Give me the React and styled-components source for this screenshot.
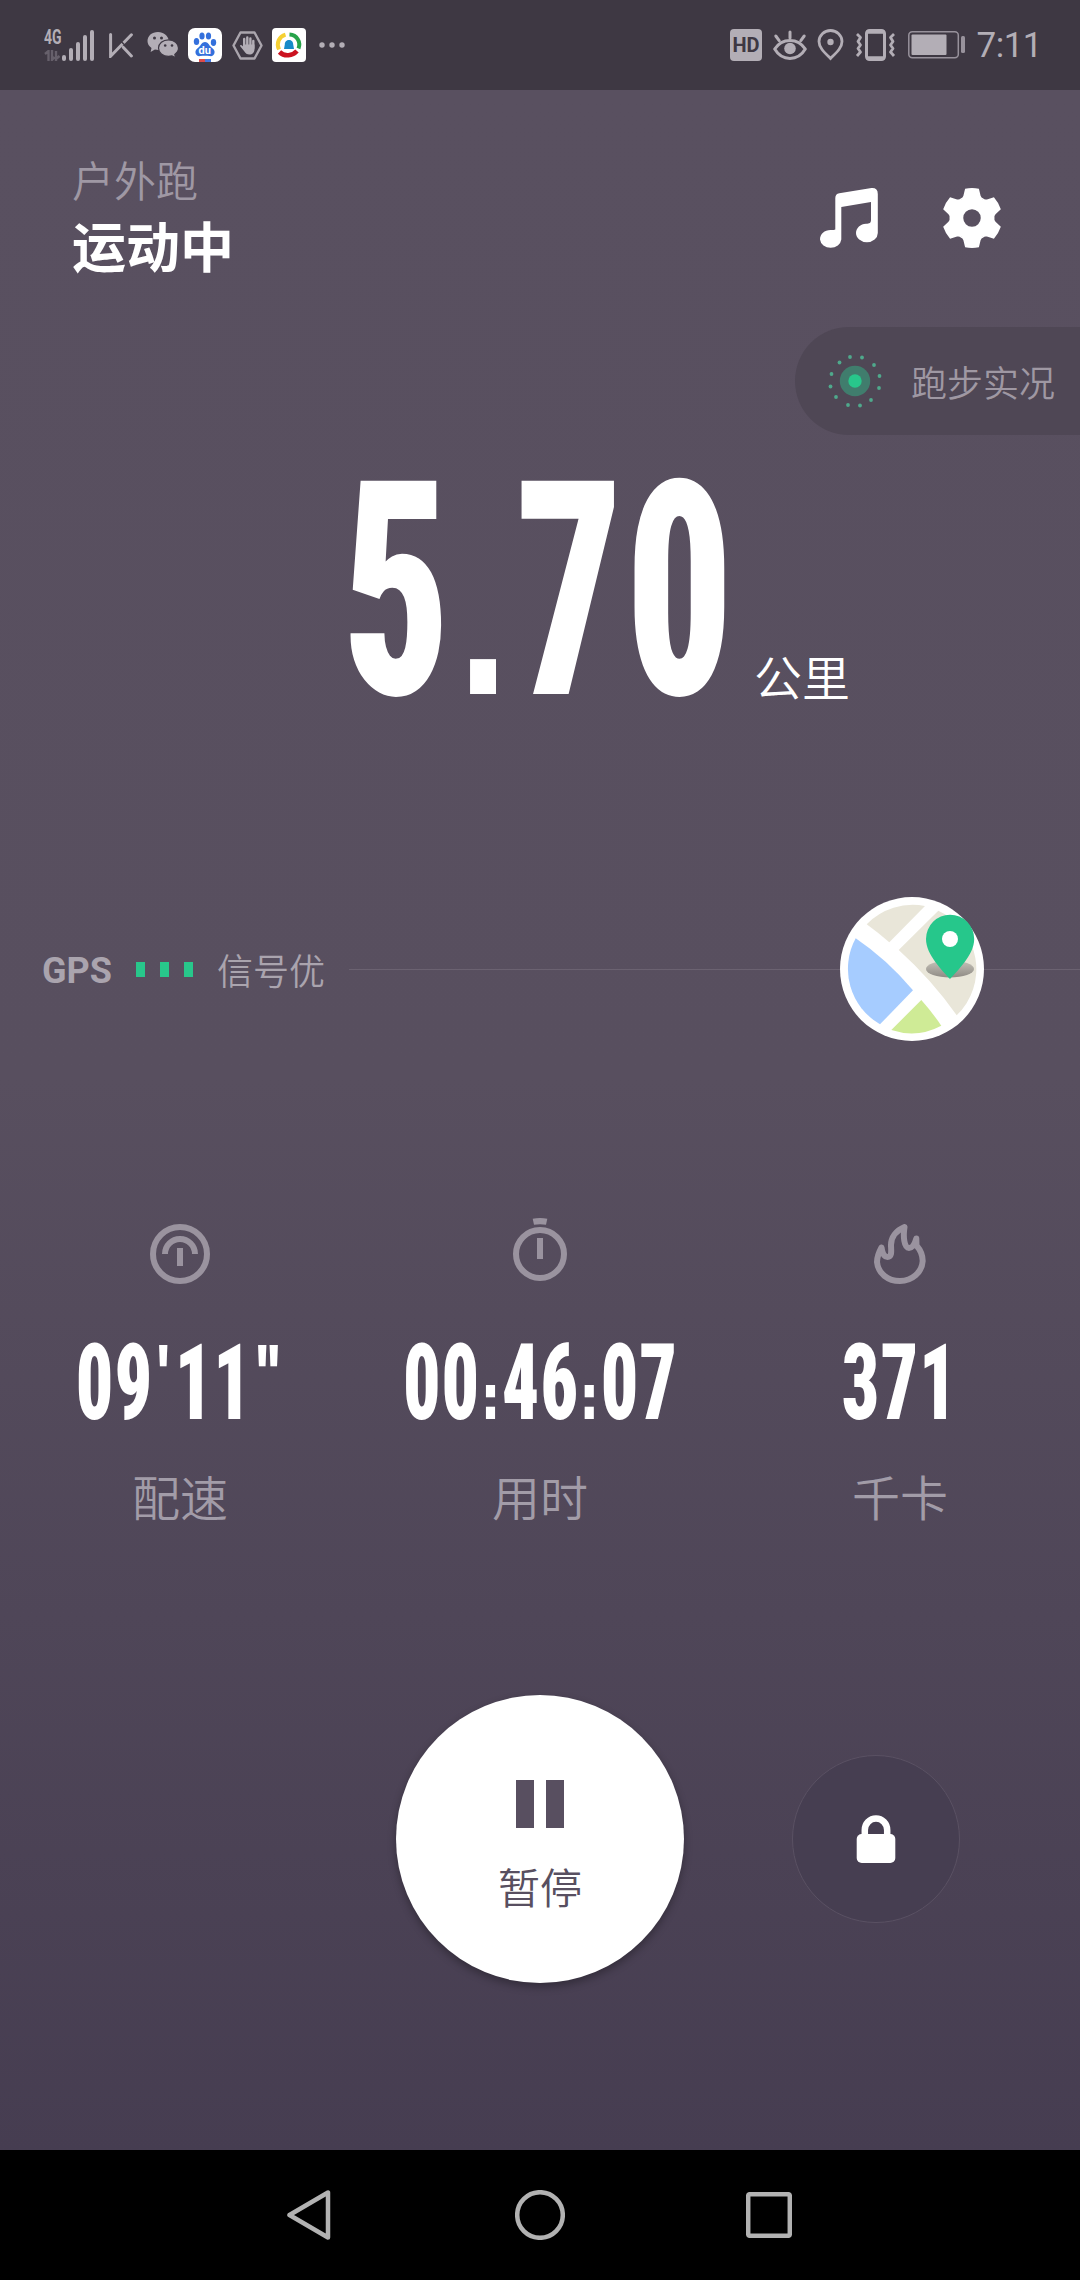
import styled, { createGlobalStyle } from 'styled-components';

const GlobalStyle = createGlobalStyle`
  * { box-sizing: border-box; }
  body {
    margin: 0;
    background: #000;
    font-family: 'Noto Sans CJK SC', sans-serif;
  }
  svg { display: block; flex: none; }
`;

const stats = [
  { id: 'pace', icon: <PaceIcon />, value: '09\'11"', label: '配速' },
  { id: 'time', icon: <TimerIcon />, value: '00:46:07', label: '用时' },
  { id: 'kcal', icon: <FlameIcon />, value: '371', label: '千卡' },
];

function App() {
  return (
    <Phone>
      <GlobalStyle />
      <StatusBar />
      <Main>
        <Header>
          <Titles>
            <Mode>户外跑</Mode>
            <State>运动中</State>
          </Titles>
          <HeaderIcons>
            <MusicIcon />
            <GearIcon />
          </HeaderIcons>
        </Header>

        <LivePill>
          <LiveIcon />
          跑步实况
        </LivePill>

        <Distance>
          <BigNumber><Numerals value="5.70" /></BigNumber>
          <Unit>公里</Unit>
        </Distance>

        <GpsRow>
          <GpsName>GPS</GpsName>
          <SignalBlocks>
            <SignalBlock />
            <SignalBlock />
            <SignalBlock />
          </SignalBlocks>
          <GpsState>信号优</GpsState>
          <Rule />
          <MapIcon />
          <Rule $width="96px" />
        </GpsRow>

        <Stats>
          {stats.map((s) => (
            <Stat key={s.id}>
              {s.icon}
              <StatValue><Numerals value={s.value} /></StatValue>
              <StatLabel>{s.label}</StatLabel>
            </Stat>
          ))}
        </Stats>

        <Controls>
          <PauseButton type="button">
            <PauseBars>
              <PauseBar />
              <PauseBar />
            </PauseBars>
            暂停
          </PauseButton>
          <LockButton type="button"><LockIcon /></LockButton>
        </Controls>
      </Main>
      <NavBar />
    </Phone>
  );
}

export default App;


// Roboto only has round dots, so the punctuation is set in Inter with its square forms
function Numerals({ value }) {
  return (
    <Squeezed>
      {value.split(/([.:'"])/).filter(Boolean).map((part, i) => (
        /[.:'"]/.test(part)
          ? <Mark key={i} $raised={/['"]/.test(part)}>{part}</Mark>
          : <span key={i}>{part}</span>
      ))}
    </Squeezed>
  );
}

function StatusBar() {
  return (
    <Status>
      <Network>
        <NetworkType>4G</NetworkType>
        <svg width="16" height="11" viewBox="0 0 16 11" fill="none" stroke="#66606b" strokeWidth="2.4">
          <path d="M1 4l3.500-3v10M8 0v10l2.500-3M12 11V1M12 9l3.500-3" />
        </svg>
      </Network>
      <svg width="33" height="31" viewBox="0 0 33 31" fill="#b3aeb6">
        <rect x="0" y="25" width="4" height="6" rx="2" />
        <rect x="7" y="18" width="4" height="13" rx="2" />
        <rect x="14" y="12" width="4" height="19" rx="2" />
        <rect x="21" y="5" width="4" height="26" rx="2" />
        <rect x="28" y="0" width="4" height="31" rx="2" />
      </svg>
      <KeepIcon />
      <WechatIcon />
      <BaiduIcon />
      <HandIcon />
      <NewsIcon />
      <svg width="26" height="6" viewBox="0 0 26 6" fill="#b3aeb6">
        <circle cx="3" cy="3" r="2.700" />
        <circle cx="13" cy="3" r="2.700" />
        <circle cx="23" cy="3" r="2.700" />
      </svg>

      <StatusRight>
        <HdBadge>HD</HdBadge>
        <EyeIcon />
        <PinIcon />
        <VibrateIcon />
        <BatteryIcon />
        <Clock>7:11</Clock>
      </StatusRight>
    </Status>
  );
}

function KeepIcon() {
  return (
    <svg width="24" height="25" viewBox="0 0 24 25" fill="none" stroke="#b3aeb6" strokeWidth="3" strokeLinecap="round">
      <path d="M1.600 1.600v21.600L22.400 1.800M14.400 14.400l8 8.600" />
      <path d="M12.200 8.600l4 4" stroke="#3e3843" strokeWidth="1.400" />
    </svg>
  );
}

function WechatIcon() {
  return (
    <svg width="32" height="28" viewBox="0 0 32 28">
      <path fill="#b3aeb6" d="M11 1C4.800 1 .5 4.900.5 10c0 3 1.500 5.300 4 7L3.600 21l4.300-2.400c1.200.3 2.400.4 3.600.4L22 10C21 4.700 16.700 1 11 1z" />
      <path fill="#b3aeb6" stroke="#3e3843" strokeWidth="1.200" d="M21.500 8.800c-5.700 0-10 3.700-10 8.300s4.300 8.300 10 8.300c1.200 0 2.400-.2 3.500-.5l3.700 2-.9-3.400c2.200-1.600 3.700-3.800 3.700-6.400 0-4.600-4.300-8.300-10-8.300z" />
      <g fill="#3e3843">
        <circle cx="7.500" cy="7" r="1.500" />
        <circle cx="14.500" cy="7" r="1.500" />
        <circle cx="18.200" cy="14.500" r="1.300" />
        <circle cx="25" cy="14.500" r="1.300" />
      </g>
    </svg>
  );
}

function BaiduIcon() {
  return (
    <svg width="34" height="34" viewBox="0 0 34 34">
      <rect width="34" height="34" rx="7" fill="#fff" />
      <g fill="#3470dc">
        <ellipse cx="8.500" cy="13.500" rx="2.700" ry="3.500" />
        <ellipse cx="14" cy="8" rx="2.600" ry="3.600" />
        <ellipse cx="20.500" cy="8" rx="2.600" ry="3.600" />
        <ellipse cx="25.500" cy="14.500" rx="2.700" ry="3.400" />
        <path d="M17 14c-3 0-4 3-6 5-2.500 2-4 3.500-3.500 6s2.500 3.500 5 3c3-.5 6-.5 9 0 2.500.5 4.500-.5 5-3s-1-4-3.500-6c-2-2-3-5-6-5z" />
      </g>
      <text x="16.700" y="26" textAnchor="middle" fill="#fff" fontFamily="Roboto" fontWeight="700" fontSize="11">du</text>
      <path d="M11 31h6v3h-6z" fill="#dd4b4b" />
      <path d="M17 31h6v3h-6z" fill="#4478e0" />
    </svg>
  );
}

function HandIcon() {
  return (
    <svg width="31" height="29" viewBox="0 0 31 29">
      <path d="M8.500 1.500h14l7 13-7 13h-14l-7-13z" fill="none" stroke="#aaa5ad" strokeWidth="2.400" strokeLinejoin="round" />
      <path d="M12.200 16V8M15.300 15V6.500M18.400 15V7.500M21.300 17v-7" fill="none" stroke="#b3aeb6" strokeWidth="2.400" strokeLinecap="round" />
      <path d="M11 13.500h11.500V18c0 3.500-2 5.500-5 5.500-2.500 0-4-1-5.500-3.500l-4-5c0-1.500 1.500-1.500 3 .5z" fill="#b3aeb6" />
    </svg>
  );
}

function NewsIcon() {
  return (
    <svg width="34" height="34" viewBox="0 0 34 34">
      <rect width="34" height="34" rx="4" fill="#fff" />
      <g fill="none" strokeWidth="4">
        <path d="M7 21.500C4 15 7 8.500 13.500 6.600" stroke="#f6d033" />
        <path d="M17.500 6.600C25 7 29 14 26.500 20.500" stroke="#27a34a" />
        <path d="M7.500 24c5 5 13 4 17.500-1" stroke="#cb1220" strokeWidth="4.600" />
      </g>
      <path d="M17 12c-3.200 0-4.200 2.500-4.200 4.500L12 21h10l-.8-4.500c0-2-1-4.500-4.200-4.500z" fill="#178ac8" />
    </svg>
  );
}

function EyeIcon() {
  return (
    <svg width="34" height="31" viewBox="0 0 34 31" fill="none" stroke="#b3aeb6" strokeWidth="3" strokeLinecap="round">
      <path d="M1.700 19C9 7.500 25 7.500 32.300 19 25 31.500 9 31.500 1.700 19z" strokeLinejoin="round" />
      <path d="M17 2v6M2.800 6l3.400 4.600M31.200 6l-3.400 4.600" />
      <circle cx="17" cy="18.500" r="5.800" fill="#b3aeb6" stroke="none" />
    </svg>
  );
}

function PinIcon() {
  return (
    <svg width="27" height="32" viewBox="0 0 27 32">
      <path d="M13.500 29.500C7 23 2 18.500 2 12.500a11.500 11 0 0 1 23 0c0 6-5 10.500-11.500 17z" fill="none" stroke="#b3aeb6" strokeWidth="2.800" />
      <circle cx="13.500" cy="13" r="3.200" fill="#b3aeb6" />
    </svg>
  );
}

function VibrateIcon() {
  return (
    <svg width="41" height="32" viewBox="0 0 41 32" fill="none" stroke="#b3aeb6" strokeWidth="3">
      <rect x="11.500" y="1.500" width="18" height="29" rx="3" />
      <path d="M11 3.200h19M11 28.800h19" />
      <path d="M2 5l3.500 3.500L3 12.500 5.500 16 3 19.500 5.500 23 2 27M39 5l-3.500 3.500L38 12.500 35.500 16l2.500 3.500-2.500 3.500L39 27" strokeWidth="2.800" strokeLinejoin="round" />
    </svg>
  );
}

function BatteryIcon() {
  return (
    <svg width="58" height="28" viewBox="0 0 58 28">
      <rect x=".8" y=".8" width="49.500" height="26" rx="3.500" fill="none" stroke="#98929c" strokeWidth="1.500" />
      <rect x="3.500" y="3.500" width="35" height="20.500" rx="1" fill="#b3aeb6" />
      <rect x="53" y="5" width="4" height="17" rx="1.500" fill="#98929c" />
    </svg>
  );
}

function MusicIcon() {
  return (
    <svg width="58" height="60" viewBox="0 0 58 60" fill="#fff">
      <path d="M15.300 41.500V10q0-4 4-4.700L51.500.1Q57.800-.3 57.800 6v39a10.900 9.200 0 0 1-21.800 0c0-5 4.500-9.200 10-9.300 3.500 0 5-.7 5-4V14l-29.700 5v32.500A10.700 9.200 0 0 1 0 51.500c0-5.500 4.500-9.500 10.500-9.500 2.500 0 4-.1 4.800-.5z" />
    </svg>
  );
}

function GearIcon() {
  return (
    <svg width="60" height="60" viewBox="-30 -30 60 60" fill="#fff">
      <circle r="15" fill="none" stroke="#fff" strokeWidth="12.500" />
      {[0, 60, 120, 180, 240, 300].map((deg) => (
        <path
          key={deg}
          transform={`rotate(${deg})`}
          d="M-7-12L-11.300-19.400Q-9.200-20-8.600-22.200L-6.900-29.300Q0-30.700 6.900-29.300L8.600-22.200Q9.200-20 11.300-19.400L7-12z"
        />
      ))}
    </svg>
  );
}

// pulsing dot with a loose ring of small ones
function LiveIcon() {
  const dots = [[-5, -24], [7, -23.500], [19, -16], [24.500, -5], [24, 7], [16, 19], [5, 24.500], [-7, 24], [-19, 16], [-24.500, 5.500], [-23.500, -7], [-15.500, -18.500]];
  return (
    <svg width="54" height="54" viewBox="-27 -27 54 54">
      {dots.map(([x, y]) => <circle key={`${x},${y}`} cx={x} cy={y} r="1.900" fill="#4fa98c" />)}
      <circle r="15.200" fill="#407d6d" />
      <circle r="6.700" fill="#28c78b" />
    </svg>
  );
}

function MapIcon() {
  return (
    <svg width="144" height="144" viewBox="0 0 144 144">
      <defs>
        <linearGradient id="pinShadow" x1="0" y1="0" x2="0" y2="1">
          <stop offset="0" stopColor="#c6c2b9" />
          <stop offset="1" stopColor="#8f8b85" />
        </linearGradient>
      </defs>
      <circle cx="72" cy="72" r="72" fill="#fff" />
      <path d="M26.700 27.300A64 64 0 0 1 85 9L49.300 45.300Q38 35.500 26.700 27.300z" fill="#e9e6d9" />
      <path d="M98.300 13.700A64 64 0 0 1 116.700 118.300Q92 83 58.700 53z" fill="#e9e6d9" />
      <path d="M15.700 41.300Q47 62.500 73 93.300L40 127.300A64 64 0 0 1 15.700 41.300z" fill="#a6ccff" />
      <path d="M81.300 103Q92 115 101.300 128.700A64 64 0 0 1 51.300 133z" fill="#cfeb96" />
      <ellipse cx="110" cy="72" rx="24" ry="8.500" fill="url(#pinShadow)" />
      <path d="M110 82C103 74 86 58 86 42a24.100 24.300 0 0 1 48.200 0C134.200 58 117 74 110 82z" fill="#26c78b" />
      <circle cx="110" cy="42" r="8" fill="#fff" />
    </svg>
  );
}

function PaceIcon() {
  return (
    <StatIcon width="60" height="66" viewBox="0 0 60 66" fill="none" stroke="#9a939f" strokeWidth="6">
      <circle cx="30" cy="36" r="27" />
      <path d="M15 36a15 15 0 0 1 30 0M30 30v18" />
    </StatIcon>
  );
}

function TimerIcon() {
  return (
    <StatIcon width="60" height="66" viewBox="0 0 60 66" fill="none" stroke="#9a939f" strokeWidth="6">
      <circle cx="30" cy="36" r="24" />
      <path d="M30 20v21" />
      <path d="M22.700.8Q30-.6 37.300.8L36 6.800Q30 5.600 24 6.800z" fill="#9a939f" stroke="none" />
    </StatIcon>
  );
}

function FlameIcon() {
  return (
    <StatIcon width="60" height="66" viewBox="-4 -6 60 66" fill="none" stroke="#9a939f" strokeWidth="6" strokeLinejoin="round">
      <path d="M7.500 23.500C4.500 29 3 33 3 38c1 11.500 11 19 23 19s22-8.500 22.700-20c0-6-2.300-11-6.200-15.500L42.300 14.500C41 19 39 24 35 24c-5 0-6-12-4.500-21C22 6.500 17 13.500 17 21c0 5 1.500 12-3.500 12-3 0-5-3-6-9.500z" />
    </StatIcon>
  );
}

function LockIcon() {
  return (
    <svg width="40" height="48" viewBox="0 0 40 48">
      <path d="M8.800 22V15a11.200 11.500 0 0 1 22.400 0v7" fill="none" stroke="#fff" strokeWidth="6.500" />
      <rect x=".7" y="19" width="38.600" height="29" rx="5" fill="#fff" />
    </svg>
  );
}

function NavBar() {
  return (
    <Nav>
      <svg width="44" height="50" viewBox="0 0 44 50">
        <path d="M41 2.500v45L2.500 25z" />
      </svg>
      <HomeIcon width="50" height="50" viewBox="0 0 50 50">
        <circle cx="25" cy="25" r="22.800" />
      </HomeIcon>
      <svg width="46" height="46" viewBox="0 0 46 46">
        <rect x="2.200" y="2.200" width="41.600" height="41.600" rx="1.500" />
      </svg>
    </Nav>
  );
}


const Phone = styled.div`
width: 1080px;
height: 2280px;
display: flex;
flex-direction: column;
overflow: hidden;
`;

const Status = styled.div`
height: 90px;
flex: none;
display: flex;
align-items: center;
padding: 0 38px 0 44px;
background: #3e3843;

> svg:nth-of-type(2) { margin-left: 14px; }
> svg:nth-of-type(3) { margin-left: 14px; }
> svg:nth-of-type(4) { margin-left: 9px; }
> svg:nth-of-type(5) { margin-left: 10px; }
> svg:nth-of-type(6) { margin-left: 9px; }
> svg:nth-of-type(7) { margin-left: 13px; }
`;

const Network = styled.div`
width: 18px;
height: 31px;
display: flex;
flex-direction: column;
justify-content: space-between;
`;

const NetworkType = styled.span`
font: 700 20px/15px Roboto, sans-serif;
color: #b3aeb6;
transform: scaleX(0.7);
transform-origin: left;
`;

const StatusRight = styled.div`
margin-left: auto;
display: flex;
align-items: center;
gap: 10.5px;

svg:last-of-type { margin-left: 2px; }
`;

const HdBadge = styled.span`
width: 32px;
height: 32px;
border-radius: 4px;
background: #b3aeb6;
color: #3e3843;
font: 700 20px/33px Roboto, sans-serif;
text-align: center;
`;

const Clock = styled.span`
padding-top: 2px;
font: 400 35px/40px Roboto, sans-serif;
letter-spacing: -0.5px;
color: #b3aeb6;
`;

const Main = styled.main`
height: 2060px;
flex: none;
display: flex;
flex-direction: column;
background: linear-gradient(#595060 0, #584f5f 48%, #463d51 100%);
`;

const Header = styled.header`
height: 237px;
display: flex;
justify-content: space-between;
padding: 58px 78px 0 72px;
`;

const Titles = styled.div`
display: flex;
flex-direction: column;
`;

const Mode = styled.span`
font-size: 42px;
line-height: 62px;
font-weight: 350;
color: #9f98a4;
`;

const State = styled.span`
font-size: 54px;
line-height: 70px;
font-weight: 700;
color: #fff;
`;

const HeaderIcons = styled.div`
display: flex;
gap: 64px;
padding-top: 40px;
`;

const LivePill = styled.div`
align-self: flex-end;
width: 285px;
height: 108px;
display: flex;
align-items: center;
gap: 29px;
padding-left: 33px;
border-radius: 54px 0 0 54px;
background: #4f4755;
font-size: 36px;
font-weight: 350;
color: #9f98a3;
white-space: nowrap;
`;

const Distance = styled.div`
height: 300px;
margin-top: 6px;
display: flex;
padding-left: 353px;
color: #fff;
`;

const BigNumber = styled.div`
width: 374px;
display: flex;
justify-content: center;
font: 900 300px/302px Roboto, sans-serif;
`;

const Squeezed = styled.span`
flex: none;
white-space: nowrap;
font-stretch: 75%;
letter-spacing: 0.014em;
transform: scaleX(0.7);
`;

const Mark = styled.span`
margin: 0 0.04em;
font-family: Inter, sans-serif;
font-size: 0.62em;
line-height: 0;
font-feature-settings: 'calt' 0, 'ss07' 1, 'ss08' 1;
vertical-align: ${(p) => (p.$raised ? '0.42em' : 'baseline')};
`;

const Unit = styled.span`
margin: 204px 0 0 27px;
font-size: 48px;
line-height: 60px;
font-weight: 350;
`;

const GpsRow = styled.div`
height: 144px;
margin-top: 156px;
padding-left: 42px;
display: flex;
align-items: center;
color: #aaa4ae;
`;

const GpsName = styled.span`
width: 94px;
margin-top: 3px;
font: 700 36px/44px Roboto, sans-serif;
`;

const SignalBlocks = styled.div`
display: flex;
gap: 15px;
`;

const SignalBlock = styled.i`
width: 9px;
height: 15px;
background: #28c78b;
`;

const GpsState = styled.span`
margin: 0 24px 1px;
font-size: 36px;
line-height: 44px;
font-weight: 350;
`;

const Rule = styled.div`
height: 1px;
flex: ${(p) => (p.$width ? `0 0 ${p.$width}` : 1)};
background: #6b6271;
`;

const Stats = styled.div`
display: grid;
grid-template-columns: repeat(3, 360px);
margin-top: 177px;
`;

const Stat = styled.div`
display: flex;
flex-direction: column;
align-items: center;
`;

const StatIcon = styled.svg`
margin-bottom: 47px;
`;

const StatValue = styled.div`
width: 300px;
display: flex;
justify-content: center;
font: 900 105px/105px Roboto, sans-serif;
color: #fff;
`;

const StatLabel = styled.span`
margin-top: 29px;
font-size: 48px;
line-height: 60px;
font-weight: 350;
color: #a29ca8;
`;

const Controls = styled.div`
display: grid;
grid-template-columns: 288px 168px;
column-gap: 108px;
align-items: center;
margin-top: 170px;
padding-left: 396px;
`;

const PauseButton = styled.button`
width: 288px;
height: 288px;
padding: 17px 0 0;
display: flex;
flex-direction: column;
align-items: center;
justify-content: center;
gap: 28px;
border: 0;
border-radius: 50%;
background: #fff;
box-shadow: 0 4px 8px rgba(0, 0, 0, 0.3);
font: 350 42px/60px 'Noto Sans CJK SC', sans-serif;
color: #584f60;
`;

const PauseBars = styled.div`
display: flex;
gap: 12px;
`;

const PauseBar = styled.i`
width: 18px;
height: 48px;
background: #584f60;
`;

const LockButton = styled.button`
width: 168px;
height: 168px;
padding: 0;
display: flex;
align-items: center;
justify-content: center;
border: 1px solid #5a5163;
border-radius: 50%;
background: #463e51;
`;

const Nav = styled.nav`
height: 130px;
flex: none;
display: flex;
align-items: center;
padding-left: 287px;
background: #000;

svg {
  fill: none;
  stroke: #b2b2b2;
  stroke-width: 4.5px;
  stroke-linejoin: round;
}
`;

const HomeIcon = styled.svg`
margin: 0 181px 0 184px;
`;
